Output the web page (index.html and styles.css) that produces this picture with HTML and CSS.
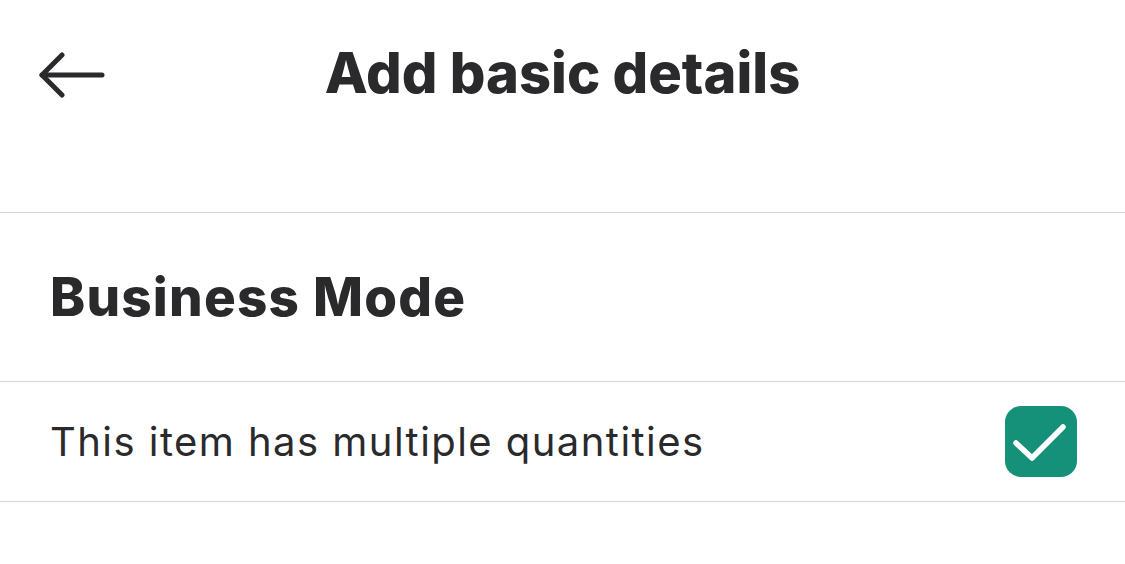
FILE: index.html
```html
<!DOCTYPE html>
<html lang="en">
<head>
  <meta charset="UTF-8">
  <meta name="viewport" content="width=device-width, initial-scale=1.0">
  <title>Add basic details</title>
  <link rel="stylesheet" href="styles.css">
</head>
<body>
  <header class="top-bar">
    <button class="back-btn" aria-label="Back">
      <svg width="68" height="46" viewBox="0 0 68 46" fill="none" stroke="#2a2a2c" stroke-width="5" stroke-linecap="round" stroke-linejoin="round">
        <path d="M64 23H4"/>
        <path d="M24 3L4 23L24 43"/>
      </svg>
    </button>
    <h1 class="page-title">Add basic details</h1>
  </header>

  <section class="section-head">
    <h2>Business Mode</h2>
  </section>

  <label class="option-row">
    <span class="option-text">This item has multiple quantities</span>
    <span class="check-box">
      <svg width="72" height="71" viewBox="0 0 72 71" fill="none" stroke="#fff" stroke-width="5.5" stroke-linecap="round" stroke-linejoin="round">
        <path d="M11 37L27 52L58 21"/>
      </svg>
    </span>
  </label>
</body>
</html>
```

FILE: styles.css
```css
body {
  margin: 0;
  background-color: #fff;
  color: #2a2a2c;
  font-family: Inter, "Noto Sans", sans-serif;
}

/* header */
.top-bar {
  height: 212px;
  border-bottom: 1px solid #d4d4d4;
  display: flex;
  align-items: flex-start;
  justify-content: center;
  position: relative;
}
.back-btn {
  position: absolute;
  left: 38px;
  top: 52px;
  background: none;
  border: 0;
  padding: 0;
  display: flex;
}
.page-title {
  margin: 38px 0 0;
  font-size: 56px;
  font-weight: 800;
  letter-spacing: 0;
  line-height: 70px;
}

/* section */
.section-head {
  height: 168px;
  border-bottom: 1px solid #d4d4d4;
  display: flex;
  align-items: center;
  padding: 0 50px;
}
.section-head h2 {
  margin: 0;
  font-size: 53px;
  font-weight: 800;
  letter-spacing: 1.2px;
}

/* row */
.option-row {
  height: 119px;
  border-bottom: 1px solid #d4d4d4;
  display: flex;
  align-items: center;
  justify-content: space-between;
  padding: 0 48px 0 50px;
}
.option-text {
  font-size: 40px;
  font-weight: 400;
  letter-spacing: 1.45px;
}
.check-box {
  width: 72px;
  height: 71px;
  border-radius: 16px;
  background-color: #15917a;
  display: flex;
}
```
